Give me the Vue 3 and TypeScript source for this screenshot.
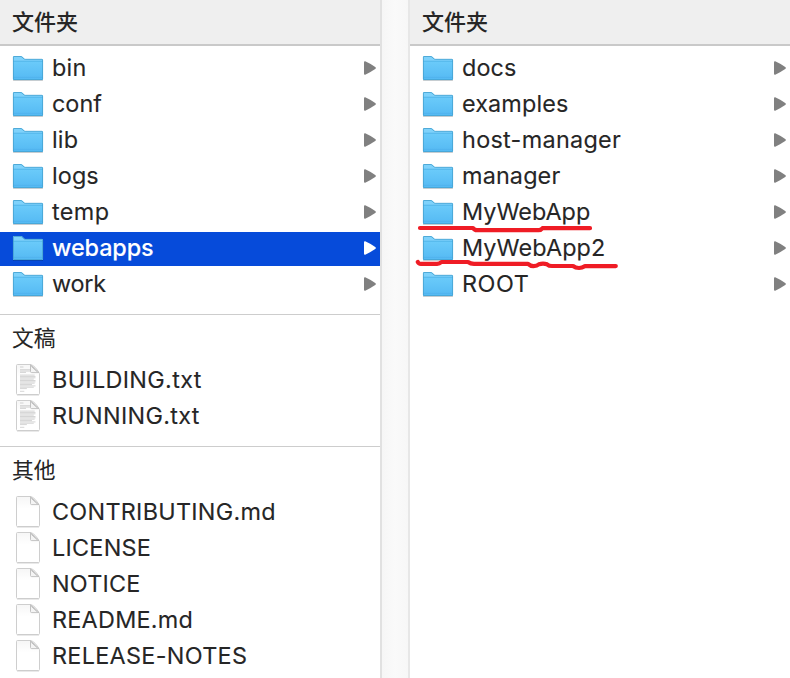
<script setup lang="ts">
type Kind = 'folder' | 'text' | 'file'
interface Item { name: string; tracking: number; selected: boolean }
interface Group { title: string; kind: Kind; items: Item[] }

// Per-name letter spacing in pixels; other names use the default spacing
const tracking: Record<string, number> = {
  bin: 0.2,
  lib: 0.2,
  logs: 0.1,
  temp: 0.4,
  webapps: -0.1,
  work: -0.2,
  docs: 0.1,
  examples: 0.12,
  'host-manager': 0.3,
  manager: 0.14,
  MyWebApp2: 0.1,
  ROOT: 0.5,
  'BUILDING.txt': 0.33,
  'RUNNING.txt': 0.3,
  'CONTRIBUTING.md': 0.27,
  LICENSE: 0.25,
  NOTICE: 0.2,
  'README.md': 0.25,
  'RELEASE-NOTES': 0.3,
}

const names = (...list: string[]): Item[] =>
  list.map((name) => ({ name, tracking: tracking[name] ?? 0, selected: name === 'webapps' }))

const columns: Group[][] = [
  [
    { title: '文件夹', kind: 'folder', items: names('bin', 'conf', 'lib', 'logs', 'temp', 'webapps', 'work') },
    { title: '文稿', kind: 'text', items: names('BUILDING.txt', 'RUNNING.txt') },
    { title: '其他', kind: 'file', items: names('CONTRIBUTING.md', 'LICENSE', 'NOTICE', 'README.md', 'RELEASE-NOTES') },
  ],
  [
    { title: '文件夹', kind: 'folder', items: names('docs', 'examples', 'host-manager', 'manager', 'MyWebApp', 'MyWebApp2', 'ROOT') },
  ],
]

// Widths of the tiny text lines on a document icon
const textLines = [4, 0, 14, 15, 7, 0, 17, 18, 18, 16, 18, 18, 17, 14, 18, 16, 8, 0, 5]
</script>

<template>
  <main class="browser">
    <svg class="defs" width="0" height="0" aria-hidden="true">
      <defs>
        <linearGradient id="folder-front" x1="0" y1="0" x2="0" y2="1">
          <stop offset="0" stop-color="#6bcbfa" />
          <stop offset="1" stop-color="#54b9f3" />
        </linearGradient>
        <linearGradient id="page-fill" x1="0" y1="0" x2="0" y2="1">
          <stop offset="0" stop-color="#f6f6f6" />
          <stop offset="0.4" stop-color="#ffffff" />
        </linearGradient>
      </defs>
    </svg>

    <template v-for="(column, c) in columns" :key="c">
      <div v-if="c > 0" class="gutter"></div>
      <section class="column">
        <div v-for="(group, g) in column" :key="group.title" class="group">
          <h2 class="title" :class="{ header: g === 0 }">{{ group.title }}</h2>
          <ul class="list">
            <li v-for="item in group.items" :key="item.name" class="row" :class="{ selected: item.selected }">
              <svg v-if="group.kind === 'folder'" class="icon" width="32" height="30" viewBox="0 0 32 30">
                <path d="M1 27.4H31" stroke="#000" stroke-opacity=".18" stroke-width="1.2" />
                <path d="M1 26V4Q1 3.1 1.8 3.1H9.2Q10 3.1 10.6 3.7L12.3 5.4Q12.8 5.9 13.5 5.9H30Q31 5.9 31 6.9V26Q31 27 30 27H2Q1 27 1 26Z" fill="#7fd2fb" />
                <path d="M1 8H31V26Q31 27 30 27H2Q1 27 1 26Z" fill="url(#folder-front)" />
                <path d="M1 8.2H31" stroke="#48aee2" stroke-width=".7" />
                <path d="M1.4 24.4H30.6" stroke="#49aae5" stroke-width=".4" />
                <path d="M1.4 26V4.1Q1.4 3.5 2 3.5H9.2L12 5.8Q12.5 6.3 13.2 6.3H30Q30.6 6.3 30.6 6.9V26Q30.6 26.6 30 26.6H2Q1.4 26.6 1.4 26Z" fill="none" stroke="#449fce" stroke-width=".8" />
              </svg>
              <svg v-else class="icon" width="32" height="34" viewBox="0 0 32 34">
                <path d="M5 32H27" stroke="#000" stroke-opacity=".15" stroke-width="1.2" />
                <path d="M4.5 2.5Q4.5 1.5 5.5 1.5H18.5Q23 2.5 27.5 10.5V30.5Q27.5 31.5 26.5 31.5H5.5Q4.5 31.5 4.5 30.5Z" fill="url(#page-fill)" stroke="#c8c8c8" stroke-width=".9" />
                <g v-if="group.kind === 'text'" stroke="#aaa" stroke-width=".5">
                  <path v-for="(w, i) in textLines" :key="i" :d="`M8 ${4 + i * 1.35}h${w * 0.86}`" />
                </g>
                <path d="M18.5 1.7V8.5Q18.5 9.6 19.6 9.6H27Z" fill="#f4f4f4" stroke="#bcbcbc" stroke-width=".9" />
                <path d="M19.2 3.3L25.6 9.2" stroke="#c2c2c2" stroke-width="1" />
              </svg>
              <span class="name" :style="{ letterSpacing: `${item.tracking}px` }">{{ item.name }}</span>
              <svg v-if="group.kind === 'folder'" class="arrow" width="12" height="14" viewBox="0 0 12 14">
                <path d="M0 1.2Q0 0 1.2 .2Q6 2.3 11.2 5.9Q12.6 7 11.2 8.1Q6 11.7 1.2 13.8Q0 14 0 12.8Z" fill="currentColor" />
              </svg>
            </li>
          </ul>
        </div>
      </section>
    </template>

    <svg class="marks" width="204" height="50" viewBox="415 222 204 50" aria-hidden="true">
      <path d="M420 228H473Q474.5 230.2 477 230.2H538.5Q541 230.2 542.5 228.2H590" />
      <path d="M417.8 262Q418.5 263.8 421 263.9H437Q439.5 263.8 441.5 262H468Q470.5 263.8 474 263.9H528Q530.5 266.2 533.5 266.2Q537 266.2 539 264.3Q543 262.8 547 264.3Q549 266 552 266H573Q575.5 268 579 268Q582 267.9 585 266.1H615.8" />
    </svg>
  </main>
</template>

<style>
body {
  margin: 0;
  overflow: hidden;
}
</style>

<style scoped>
.browser {
  position: relative;
  display: grid;
  grid-template-columns: 380px 30px 380px;
  width: 790px;
  height: 678px;
  overflow: hidden;
  background: #fff;
  color: #262626;
  font-family: Inter, "Noto Sans CJK SC", sans-serif;
}
.defs {
  position: absolute;
}
.column {
  min-width: 0;
}
.gutter {
  box-sizing: border-box;
  border-left: 2px solid #e1e1e1;
  border-right: 2px solid #e7e7e7;
  background: linear-gradient(90deg, #f6f6f6, #fafafa 50%, #f7f7f7);
}
.title {
  box-sizing: border-box;
  height: 47px;
  margin: 0;
  padding-left: 12px;
  font: 400 21.8px/44px "Noto Sans CJK SC", sans-serif;
}
.title.header {
  height: 46px;
  border-bottom: 2px solid #c9c9c9;
  background: #efefef;
  font-size: 22px;
  font-weight: 500;
  line-height: 40px;
}
.group + .group {
  margin-top: 12px;
  border-top: 1px solid #cdcdcd;
}
.list {
  margin: 0;
  padding: 0;
  list-style: none;
}
.header + .list {
  padding-top: 4px;
}
.row {
  display: flex;
  align-items: center;
  box-sizing: border-box;
  height: 36px;
  padding: 0 4px 0 12px;
  font-size: 23.4px;
  line-height: 34px;
  -webkit-text-stroke: 0.1px currentColor;
}
.selected {
  height: 34px;
  margin-top: 2px;
  padding-bottom: 2px;
  background: #064bda;
  color: #fff;
  font-weight: 500;
}
.icon {
  flex: none;
  margin-right: 8px;
}
.name {
  flex: 1;
  white-space: nowrap;
}
.arrow {
  flex: none;
  color: #808080;
}
.selected .arrow {
  color: #fff;
}
.marks {
  position: absolute;
  left: 415px;
  top: 222px;
  fill: none;
  stroke: #ef1c25;
  stroke-width: 4.2;
  stroke-linecap: round;
  stroke-linejoin: round;
}
</style>
